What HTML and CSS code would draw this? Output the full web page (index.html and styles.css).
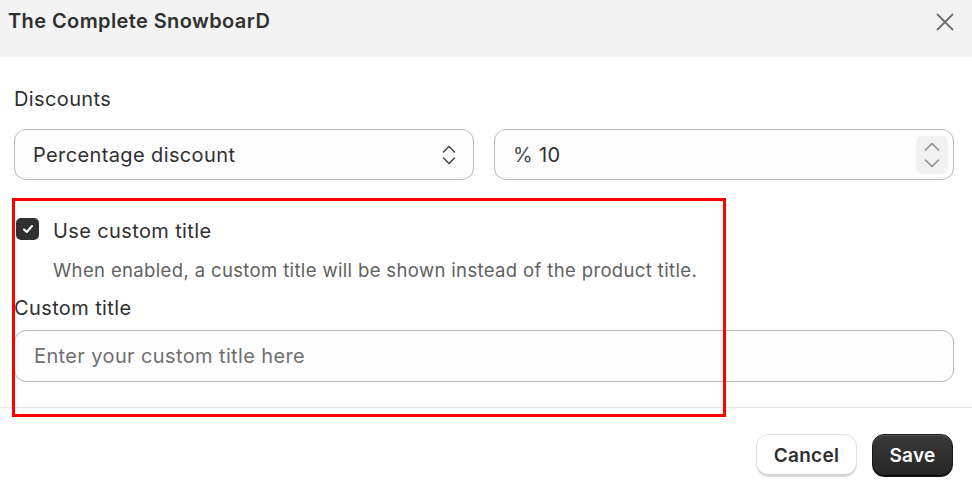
FILE: index.html
```html
<!DOCTYPE html>
<html>
<head>
<meta charset="utf-8">
<link rel="stylesheet" href="styles.css">
</head>
<body>
<div class="modal">
  <div class="header">
    <h1 class="title">The Complete SnowboarD</h1>
    <button class="close" aria-label="Close">
      <svg width="18" height="18" viewBox="0 0 18 18"><path d="M1.5 1.5 L16.5 16.5 M16.5 1.5 L1.5 16.5" stroke="#6e6e6e" stroke-width="1.8" stroke-linecap="round" fill="none"/></svg>
    </button>
  </div>
  <div class="body">
    <div class="label">Discounts</div>
    <div class="row">
      <div class="field select">
        <span class="value">Percentage discount</span>
        <svg class="sel-arrows" width="16" height="22" viewBox="0 0 16 22"><path d="M2.5 8 L8 2.5 L13.5 8 M2.5 14 L8 19.5 L13.5 14" stroke="#4a4a4a" stroke-width="1.6" stroke-linecap="round" stroke-linejoin="round" fill="none"/></svg>
      </div>
      <div class="field number">
        <span class="value"><span class="prefix">%</span> 10</span>
        <div class="stepper">
          <svg width="18" height="30" viewBox="0 0 18 30"><path d="M2.5 10 L9 3.5 L15.5 10 M2.5 20 L9 26.5 L15.5 20" stroke="#8a8a8a" stroke-width="1.5" stroke-linecap="round" stroke-linejoin="round" fill="none"/></svg>
        </div>
      </div>
    </div>
    <div class="check-row">
      <span class="checkbox">
        <svg width="14" height="14" viewBox="0 0 14 14"><path d="M3 7.4 L5.8 10 L11 4" stroke="#fff" stroke-width="2" stroke-linecap="round" stroke-linejoin="round" fill="none"/></svg>
      </span>
      <span class="check-label">Use custom title</span>
    </div>
    <div class="help">When enabled, a custom title will be shown instead of the product title.</div>
    <div class="label label-custom">Custom title</div>
    <div class="field text">
      <span class="placeholder">Enter your custom title here</span>
    </div>
  </div>
  <div class="footer">
    <button class="btn btn-cancel">Cancel</button>
    <button class="btn btn-save">Save</button>
  </div>
  <div class="highlight"></div>
</div>
</body>
</html>
```
FILE: styles.css
```css
* { box-sizing: border-box; }
html, body { margin: 0; padding: 0; background: #fff; }
body {
  font-family: Inter, "Noto Sans", sans-serif;
  color: #303030;
  width: 972px;
  height: 492px;
  overflow: hidden;
  letter-spacing: 0.38px;
}
.modal { position: relative; width: 972px; height: 492px; }
.header {
  height: 57px;
  background: #f3f3f3;
  display: flex;
  justify-content: space-between;
  align-items: flex-start;
  padding: 10px 18px 0 8px;
}
.title {
  margin: 0;
  font-size: 20px;
  font-weight: 600;
  line-height: 23px;
  color: #303030;
  letter-spacing: 0.4px;
}
.close {
  border: 0;
  background: none;
  padding: 0;
  margin-top: 3px;
  width: 18px;
  height: 18px;
  display: flex;
}
.body { padding: 0 18px 0 14px; }
.label {
  font-size: 20px;
  line-height: 24px;
  margin-top: 30px;
  color: #303030;
}
.row {
  display: grid;
  grid-template-columns: 1fr 1fr;
  gap: 20px;
  margin-top: 18px;
}
.field {
  min-width: 0;
  height: 51px;
  border: 1px solid #b8b8b8;
  border-radius: 12px;
  background: #fdfdfd;
  display: flex;
  align-items: center;
  justify-content: space-between;
  padding: 0 14px 0 18px;
  font-size: 20px;
}
.value { color: #303030; }
.prefix { color: #4a4a4a; }
.select { padding-right: 16px; }
.number { padding-right: 5px; }
.stepper {
  width: 32px;
  height: 38px;
  background: #f1f1f1;
  border-radius: 7px;
  display: flex;
  align-items: center;
  justify-content: center;
}
.check-row {
  display: flex;
  align-items: center;
  margin-top: 38px;
  padding-left: 2px;
  height: 22px;
}
.checkbox {
  width: 23px;
  height: 22px;
  border-radius: 5px;
  background: #303030;
  display: flex;
  align-items: center;
  justify-content: center;
  flex: none;
}
.check-label {
  margin-left: 14px;
  font-size: 20px;
  line-height: 24px;
  margin-top: 3px;
}
.help {
  margin-top: 19px;
  margin-left: 39px;
  font-size: 18.5px;
  line-height: 22px;
  color: #616161;
  letter-spacing: 0.36px;
}
.label-custom { margin-top: 15px; }
.text {
  margin-top: 10px;
  height: 52px;
  padding-left: 19px;
}
.placeholder { color: #707070; }
.footer {
  margin-top: 25px;
  border-top: 1px solid #e3e3e3;
  display: flex;
  justify-content: flex-end;
  gap: 15px;
  padding: 26px 19px 0 0;
}
.btn {
  height: 43px;
  border-radius: 12px;
  font-family: Inter, "Noto Sans", sans-serif;
  font-size: 19px;
  font-weight: 600;
  letter-spacing: 0.3px;
  padding: 0;
}
.btn-cancel {
  width: 101px;
  background: #fff;
  color: #303030;
  border: 1px solid #e0e0e0;
  box-shadow: inset 0 -2px 0 #d4d4d4;
}
.btn-save {
  width: 81px;
  background: linear-gradient(#3a3a3a, #262626);
  color: #fff;
  border: 1px solid #1a1a1a;
  box-shadow: inset 0 1px 0 #555, inset 0 -1px 0 #000;
}
.highlight {
  position: absolute;
  left: 12px;
  top: 198px;
  width: 714px;
  height: 219px;
  border: 3.5px solid #ff0000;
  pointer-events: none;
}
```
